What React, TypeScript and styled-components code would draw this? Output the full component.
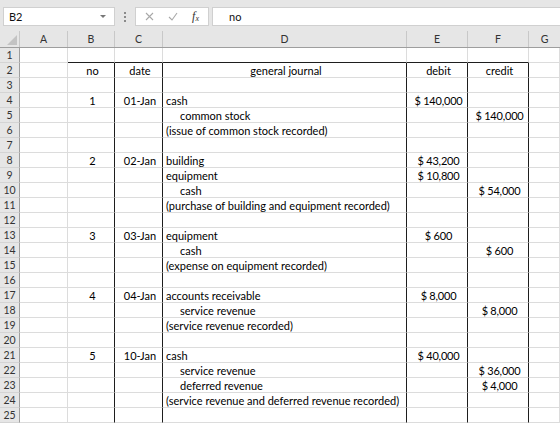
import React from "react";
import styled, { createGlobalStyle } from "styled-components";

const GlobalStyle = createGlobalStyle`
  html, body {
    margin: 0;
    padding: 0;
    background: #fff;
  }
  body {
    font-family: Lato, "Liberation Sans", sans-serif;
    font-size: 11px;
    color: #000;
    overflow: hidden;
  }
  * {
    box-sizing: border-box;
  }
`;

const COLS = "20px 48px 47px 48px 244px 61px 61px 1fr";

const Window = styled.div`
  width: 560px;
  height: 424px;
  overflow: hidden;
  background: #fff;
`;

const FormulaBar = styled.div`
  display: flex;
  align-items: center;
  height: 31px;
  padding: 7px 0 5px 3px;
  background: #e6e6e6;
`;

const NameBox = styled.div`
  position: relative;
  display: flex;
  align-items: center;
  width: 112px;
  height: 19px;
  padding-left: 5px;
  background: #fff;
  border: 1px solid #d0d0d0;
  color: #111;
`;

const DropArrow = styled.span`
  position: absolute;
  right: 8px;
  top: 7px;
  border-left: 3px solid transparent;
  border-right: 3px solid transparent;
  border-top: 3px solid #777;
`;

const Grip = styled.div`
  display: flex;
  justify-content: center;
  width: 20px;
`;

const FxBox = styled.div`
  display: flex;
  align-items: center;
  justify-content: space-around;
  width: 74px;
  height: 19px;
  padding: 0 2px;
  background: #fff;
  border: 1px solid #d0d0d0;
`;

const Fx = styled.span`
  font-family: "Liberation Serif", serif;
  font-style: italic;
  font-size: 12px;
  color: #333;
  sub {
    font-size: 8px;
    vertical-align: -1px;
  }
`;

const Input = styled.div`
  flex: 1;
  display: flex;
  align-items: center;
  height: 19px;
  margin-left: 3px;
  padding-left: 16px;
  background: #fff;
  border: 1px solid #d0d0d0;
  border-right: none;
  color: #111;
`;

const HeaderRow = styled.div`
  display: grid;
  grid-template-columns: ${COLS};
  height: 17px;
  background: #e6e6e6;
  border-bottom: 1px solid #9e9e9e;
`;

const ColHead = styled.div`
  display: flex;
  align-items: center;
  justify-content: center;
  color: #333;
  font-size: 10.5px;
  border-right: 1px solid #c8c8c8;
  &:last-child {
    border-right: none;
  }
`;

const Corner = styled.div`
  position: relative;
  border-right: 1px solid #c8c8c8;
  svg {
    position: absolute;
    right: 2px;
    bottom: 2px;
  }
`;

const Row = styled.div`
  display: grid;
  grid-template-columns: ${COLS};
  height: 15px;
`;

const RowHead = styled.div`
  display: flex;
  align-items: center;
  justify-content: center;
  background: #e6e6e6;
  color: #333;
  font-size: 10.5px;
  border-right: 1px solid #9e9e9e;
  border-bottom: 1px solid #d4d4d4;
`;

const Cell = styled.div<{
  $align?: string;
  $indent?: boolean;
  $dark?: boolean;
  $line?: boolean;
  $money?: boolean;
}>`
  display: flex;
  align-items: center;
  justify-content: ${({ $align }) => $align || "flex-start"};
  padding-left: ${({ $indent }) => ($indent ? "17px" : "3px")};
  letter-spacing: ${({ $money }) => ($money ? "-0.2px" : "normal")};
  white-space: pre;
  border-right: 1px solid ${({ $dark }) => ($dark ? "#1e1e1e" : "#dcdcdc")};
  border-bottom: 1px solid ${({ $line }) => ($line ? "#1e1e1e" : "#dcdcdc")};
`;

type Entry = {
  no?: string;
  date?: string;
  text?: string;
  indent?: boolean;
  center?: boolean;
  debit?: string;
  credit?: string;
};

const usd = (n: string) => `$\u2005${n}`;

const entries: Entry[] = [
  {},
  { no: "no", date: "date", text: "general journal", center: true, debit: "debit", credit: "credit" },
  {},
  { no: "1", date: "01-Jan", text: "cash", debit: usd("140,000") },
  { text: "common stock", indent: true, credit: usd("140,000") },
  { text: "(issue of common stock recorded)" },
  {},
  { no: "2", date: "02-Jan", text: "building", debit: usd("43,200") },
  { text: "equipment", debit: usd("10,800") },
  { text: "cash", indent: true, credit: usd("54,000") },
  { text: "(purchase of building and equipment recorded)" },
  {},
  { no: "3", date: "03-Jan", text: "equipment", debit: usd("600") },
  { text: "cash", indent: true, credit: usd("600") },
  { text: "(expense on equipment recorded)" },
  {},
  { no: "4", date: "04-Jan", text: "accounts receivable", debit: usd("8,000") },
  { text: "service revenue", indent: true, credit: usd("8,000") },
  { text: "(service revenue recorded)" },
  {},
  { no: "5", date: "10-Jan", text: "cash", debit: usd("40,000") },
  { text: "service revenue", indent: true, credit: usd("36,000") },
  { text: "deferred revenue", indent: true, credit: usd("4,000") },
  { text: "(service revenue and deferred revenue recorded)" },
  {},
];

const letters = ["A", "B", "C", "D", "E", "F", "G"];

export default function App() {
  return (
    <Window>
      <GlobalStyle />
      <FormulaBar>
        <NameBox>
          B2
          <DropArrow />
        </NameBox>
        <Grip>
          <svg width="2" height="10" viewBox="0 0 2 10">
            <rect x="0" y="0" width="2" height="2" fill="#8a8a8a" />
            <rect x="0" y="4" width="2" height="2" fill="#8a8a8a" />
            <rect x="0" y="8" width="2" height="2" fill="#8a8a8a" />
          </svg>
        </Grip>
        <FxBox>
          <svg width="9" height="9" viewBox="0 0 9 9">
            <path d="M1 1 L8 8 M8 1 L1 8" stroke="#a8a8a8" strokeWidth="1.1" />
          </svg>
          <svg width="10" height="9" viewBox="0 0 10 9">
            <path d="M1 5 L4 8 L9 1" stroke="#a8a8a8" strokeWidth="1.1" fill="none" />
          </svg>
          <Fx>
            f<sub>x</sub>
          </Fx>
        </FxBox>
        <Input>no</Input>
      </FormulaBar>

      <HeaderRow>
        <Corner>
          <svg width="10" height="10" viewBox="0 0 10 10">
            <polygon points="10,0 10,10 0,10" fill="#c3c3c3" />
          </svg>
        </Corner>
        {letters.map((l) => (
          <ColHead key={l}>{l}</ColHead>
        ))}
      </HeaderRow>

      {entries.map((e, i) => {
        const inTable = i >= 1;
        const top = i === 0;
        const money = i !== 1;
        return (
          <Row key={i}>
            <RowHead>{i + 1}</RowHead>
            <Cell />
            <Cell $align="center" $dark={inTable} $line={top}>
              {e.no}
            </Cell>
            <Cell $align="center" $dark={inTable} $line={top}>
              {e.date}
            </Cell>
            <Cell
              $align={e.center ? "center" : "flex-start"}
              $indent={e.indent}
              $dark={inTable}
              $line={top}
            >
              {e.text}
            </Cell>
            <Cell $align="center" $dark={inTable} $line={top} $money={money}>
              {e.debit}
            </Cell>
            <Cell $align="center" $dark={inTable} $line={top} $money={money}>
              {e.credit}
            </Cell>
            <Cell />
          </Row>
        );
      })}
    </Window>
  );
}
